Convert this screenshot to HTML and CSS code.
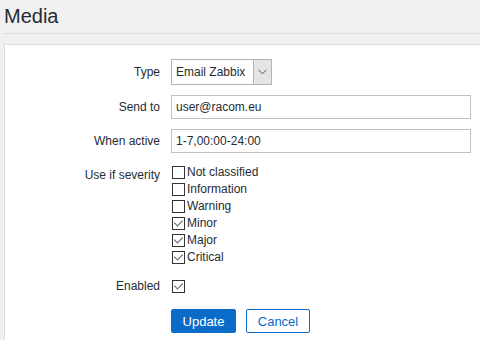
FILE: index.html
```html
<!DOCTYPE html>
<html>
<head>
<meta charset="utf-8">
<link rel="stylesheet" href="styles.css">
</head>
<body>
<header class="header"><h1 class="title">Media</h1></header>
<main class="panel">
  <div class="form">
    <div class="label">Type</div>
    <div class="field">
      <div class="select">
        <span class="select-text">Email Zabbix</span>
        <span class="select-arrow"><svg width="9" height="6" viewBox="0 0 9 6"><polyline points="0.5,0.8 4.5,4.8 8.5,0.8" fill="none" stroke="#555" stroke-width="1"/></svg></span>
      </div>
    </div>

    <div class="label">Send to</div>
    <div class="field"><input class="text-input" type="text" value="user@racom.eu"></div>

    <div class="label">When active</div>
    <div class="field"><input class="text-input" type="text" value="1-7,00:00-24:00"></div>

    <div class="label label-top">Use if severity</div>
    <div class="field">
      <ul class="checks">
        <li class="check-row"><input class="cb" type="checkbox"><span>Not classified</span></li>
        <li class="check-row"><input class="cb" type="checkbox"><span>Information</span></li>
        <li class="check-row"><input class="cb" type="checkbox"><span>Warning</span></li>
        <li class="check-row"><input class="cb" type="checkbox" checked><span>Minor</span></li>
        <li class="check-row"><input class="cb" type="checkbox" checked><span>Major</span></li>
        <li class="check-row"><input class="cb" type="checkbox" checked><span>Critical</span></li>
      </ul>
    </div>

    <div class="label label-enabled">Enabled</div>
    <div class="field field-enabled"><input class="cb" type="checkbox" checked></div>

    <div class="label"></div>
    <div class="field buttons">
      <button class="btn btn-primary" type="button">Update</button>
      <button class="btn btn-alt" type="button">Cancel</button>
    </div>
  </div>
</main>
</body>
</html>
```
FILE: styles.css
```css
* { box-sizing: border-box; }
html, body { margin: 0; padding: 0; }
body {
  background: #f0f0f0;
  font-family: "Liberation Sans", Arial, sans-serif;
  color: #1f2c33;
  width: 480px;
  height: 340px;
  overflow: hidden;
}
.header {
  margin-left: 4px;
  height: 34px;
  border-bottom: 1px solid #dcdcdc;
  padding-top: 6px;
}
.title {
  margin: 0;
  font-size: 20px;
  line-height: 20px;
  font-weight: normal;
  color: #1f2c33;
}
.panel {
  margin: 10px 0 0 4px;
  background: #fff;
  border-top: 1px solid #dcdcdc;
  border-left: 1px solid #dcdcdc;
  height: 296px;
  padding-top: 14px;
}
.form {
  display: grid;
  grid-template-columns: 155px 300px;
  column-gap: 11px;
  row-gap: 10px;
  font-size: 12px;
}
.label {
  text-align: right;
  display: flex;
  align-items: center;
  justify-content: flex-end;
}
.label-top {
  align-items: flex-start;
  padding-top: 5px;
}
.label-enabled, .field-enabled { margin-top: 5px; }
.field { display: flex; align-items: center; }
.select {
  width: 101px;
  height: 26px;
  border: 1px solid #b4b4b4;
  display: flex;
  align-items: stretch;
  background: #fff;
}
.select-text {
  flex: 1;
  padding-left: 4px;
  display: flex;
  align-items: center;
  font-size: 12px;
}
.select-arrow {
  width: 18px;
  background: #e5e5e5;
  border-left: 1px solid #b4b4b4;
  display: flex;
  align-items: center;
  justify-content: center;
}
.text-input {
  width: 300px;
  height: 24px;
  border: 1px solid #c0c0c0;
  padding: 0 4px;
  margin: 0;
  font-family: "Liberation Sans", Arial, sans-serif;
  font-size: 12px;
  color: #1f2c33;
  background: #fff;
  outline: none;
}
.checks {
  list-style: none;
  margin: 3px 0 0 0;
  padding: 0;
  display: flex;
  flex-direction: column;
  gap: 4px;
}
.check-row {
  display: flex;
  align-items: center;
  gap: 2px;
  height: 13px;
  line-height: 13px;
}
.cb {
  appearance: none;
  -webkit-appearance: none;
  width: 13px;
  height: 13px;
  margin: 0 0 0 1px;
  border: 1px solid #333;
  background: #fff;
  position: relative;
  flex: none;
}
.cb:checked::after {
  content: "";
  position: absolute;
  left: 3px;
  top: 0px;
  width: 4px;
  height: 7px;
  border-right: 1.5px solid #555;
  border-bottom: 1.5px solid #555;
  transform: rotate(45deg);
}
.buttons {
  gap: 10px;
  margin-top: 6px;
}
.btn {
  height: 24px;
  padding: 0;
  margin: 0;
  font-family: "Liberation Sans", Arial, sans-serif;
  font-size: 13px;
  border-radius: 2px;
  cursor: pointer;
}
.btn-primary {
  width: 65px;
  background: #0a6bc9;
  border: 1px solid #0a6bc9;
  color: #fff;
}
.btn-alt {
  width: 64px;
  background: #fff;
  border: 1px solid #0a6bc9;
  color: #0a6bc9;
}
```
